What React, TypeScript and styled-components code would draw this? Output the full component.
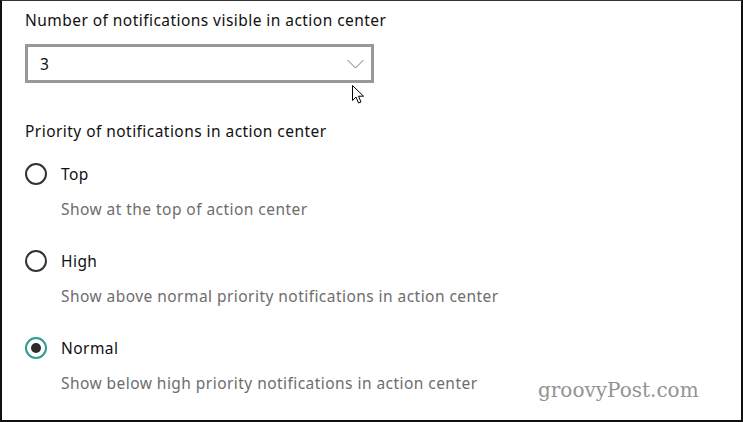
import React, {FC, useState} from 'react';
import styled, {createGlobalStyle} from 'styled-components';

const Global = createGlobalStyle`
  html, body {
    margin: 0;
    padding: 0;
    background: #ffffff;
  }
`

const Frame = styled.div`
  position: relative;
  box-sizing: border-box;
  width: 743px;
  height: 422px;
  border-top: 1px solid #333;
  border-left: 2px solid #111;
  border-right: 2px solid #111;
  border-bottom: 2px solid #111;
  padding: 9px 0 0 23px;
  font-family: "Noto Sans", "Open Sans", sans-serif;
  font-size: 15.5px;
  letter-spacing: 0.45px;
  color: #111;
  overflow: hidden;
`

const Label = styled.div<{ $gap?: number }>`
  line-height: 20px;
  margin-top: ${p => p.$gap ?? 0}px;
`

const Select = styled.div`
  position: relative;
  box-sizing: border-box;
  width: 349px;
  height: 39px;
  margin-top: 14px;
  border: 3px solid #999999;
  display: flex;
  align-items: center;
  justify-content: space-between;
  padding: 0 7px 0 12px;
`

const Chevron = styled.svg`
  width: 17px;
  height: 10px;
`

const Pointer = styled.svg`
  position: absolute;
  left: 324px;
  top: 38px;
  width: 13px;
  height: 19px;
`

const Options = styled.div`
  display: flex;
  flex-direction: column;
  gap: 31px;
  margin-top: 22px;
`

const Option = styled.div`
  display: flex;
  flex-direction: column;
  gap: 14px;
`

const RadioRow = styled.label`
  display: flex;
  align-items: center;
  height: 22px;
  gap: 14px;
  cursor: pointer;
`

const Circle = styled.span<{ $on: boolean }>`
  box-sizing: border-box;
  width: 22px;
  height: 22px;
  border-radius: 50%;
  border: 2px solid ${p => p.$on ? '#2f9c8f' : '#333333'};
  display: flex;
  align-items: center;
  justify-content: center;
  &::after {
    content: '';
    width: 10px;
    height: 10px;
    border-radius: 50%;
    background: #2b2b2b;
    display: ${p => p.$on ? 'block' : 'none'};
  }
`

const Hint = styled.div`
  line-height: 20px;
  color: #6d6d6d;
  padding-left: 36px;
`

const Watermark = styled.div`
  position: absolute;
  left: 536px;
  top: 377px;
  font-family: "DejaVu Serif", "Liberation Serif", serif;
  font-size: 20px;
  letter-spacing: 0;
  color: #939393;
`

const options = [
    {name: 'Top', hint: 'Show at the top of action center'},
    {name: 'High', hint: 'Show above normal priority notifications in action center'},
    {name: 'Normal', hint: 'Show below high priority notifications in action center'},
];

const App: FC = () => {
    const [priority, setPriority] = useState('Normal');

    return (
        <Frame>
            <Global/>
            <Label>Number of notifications visible in action center</Label>
            <Select>
                <span>3</span>
                <Chevron viewBox="0 0 17 10">
                    <polyline points="0.5,1 8.5,9 16.5,1" fill="none" stroke="#777" strokeWidth="1"/>
                </Chevron>
                <Pointer viewBox="0 0 13 19">
                    <path d="M0.5 0.5 L0.5 15.5 L4 12 L6.5 18 L9 17 L6.5 11.2 L11.5 11.2 Z"
                          fill="#fff" stroke="#000" strokeWidth="1" strokeLinejoin="round"/>
                </Pointer>
            </Select>
            <Label $gap={38}>Priority of notifications in action center</Label>
            <Options>
                {options.map(o => (
                    <Option key={o.name}>
                        <RadioRow onClick={() => setPriority(o.name)}>
                            <Circle $on={priority === o.name}/>
                            <span>{o.name}</span>
                        </RadioRow>
                        <Hint>{o.hint}</Hint>
                    </Option>
                ))}
            </Options>
            <Watermark>groovyPost.com</Watermark>
        </Frame>
    );
}

export default App;
